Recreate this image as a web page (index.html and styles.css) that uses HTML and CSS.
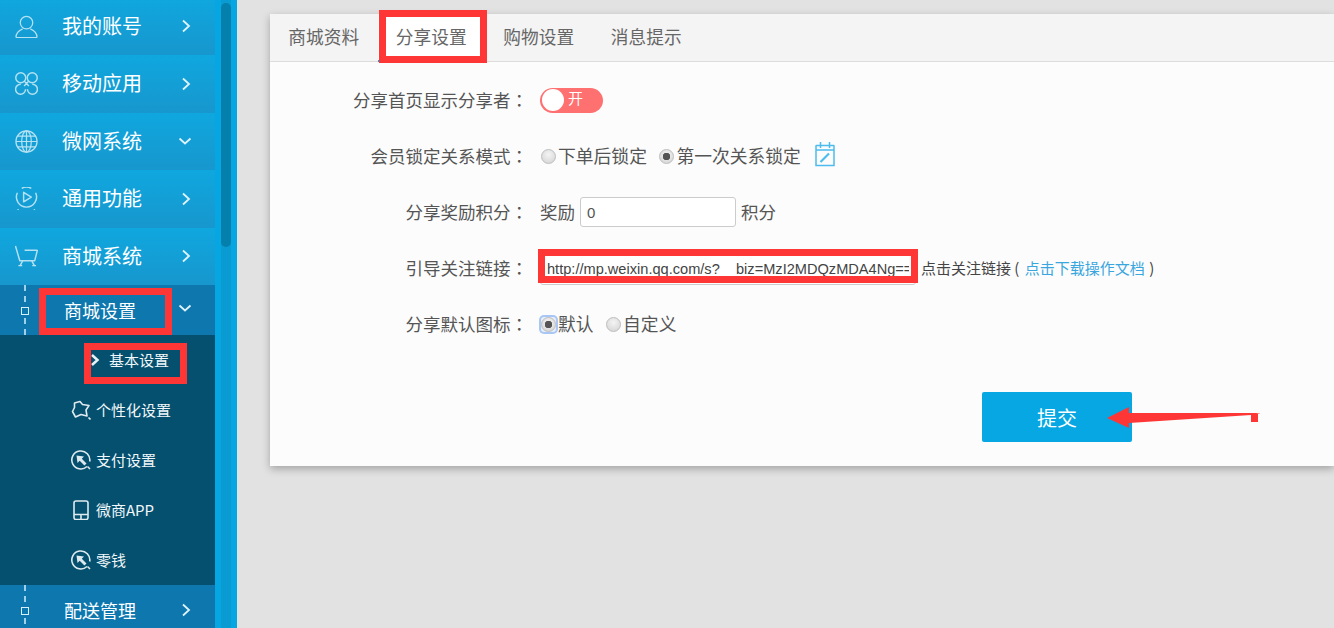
FILE: index.html
```html
<!DOCTYPE html>
<html lang="zh-CN">
<head>
<meta charset="utf-8">
<title>分享设置</title>
<link rel="stylesheet" href="styles.css">
</head>
<body>
<div class="app">
  <aside class="sidebar">
    <nav class="menu">
      <a class="row">
        <svg class="ico" viewBox="0 0 24 24"><circle cx="12" cy="8" r="6.500"/><path d="M1 23.500c0-5 3.500-7.500 7-9M23 23.500c0-5-3.500-7.500-7-9M1 23.500h22"/></svg>
        <span class="row-label">我的账号</span>
        <svg class="chev" viewBox="0 0 10 14"><path d="M2 1.500 8 7l-6 5.500"/></svg>
      </a>
      <a class="row">
        <svg class="ico ico-bold" viewBox="0 0 24 24"><circle cx="6" cy="6" r="5.200"/><circle cx="18" cy="6" r="5.200"/><path d="M11 18a5.200 5.200 0 1 1-5-5.200M13 18a5.200 5.200 0 1 0 5-5.200M9.500 9.500l5 5M14.500 9.500l-5 5"/></svg>
        <span class="row-label">移动应用</span>
        <svg class="chev" viewBox="0 0 10 14"><path d="M2 1.500 8 7l-6 5.500"/></svg>
      </a>
      <a class="row">
        <svg class="ico" viewBox="0 0 24 24"><circle cx="12" cy="12" r="11"/><ellipse cx="12" cy="12" rx="5" ry="11"/><path d="M12 1v22M1 12h22M2.500 6.500h19M2.500 17.500h19"/></svg>
        <span class="row-label">微网系统</span>
        <svg class="chev chev-down" viewBox="0 0 14 10"><path d="M1.500 2.500 7 7.500l5.500-5"/></svg>
      </a>
      <a class="row">
        <svg class="ico ico-bold" viewBox="0 0 24 24"><path d="M2.500 6A10.500 10.500 0 1 0 21.500 6M7 1.500A10.500 10.500 0 0 1 17 1.500"/><path d="M9 5.500l8 5-8 5z"/><path class="ico-dots" d="M2.500 23.500h1.500M19.500 23.500h1.500"/></svg>
        <span class="row-label">通用功能</span>
        <svg class="chev" viewBox="0 0 10 14"><path d="M2 1.500 8 7l-6 5.500"/></svg>
      </a>
      <a class="row">
        <svg class="ico ico-bold" viewBox="0 0 24 24"><path d="M.5 1 5 16.500h15.500L23.500 5M10 5.500h13"/><path d="M8 16.500 5 22M17.500 16.500 20.500 22M3.500 21.500h4M18 21.500h4"/></svg>
        <span class="row-label">商城系统</span>
        <svg class="chev" viewBox="0 0 10 14"><path d="M2 1.500 8 7l-6 5.500"/></svg>
      </a>
      <a class="row sub-row">
        <span class="node"></span>
        <span class="sub-label">商城设置</span>
        <svg class="chev chev-down" viewBox="0 0 14 10"><path d="M1.500 2.500 7 7.500l5.500-5"/></svg>
      </a>
      <ul class="submenu">
        <li class="leaf leaf-current">
          <svg class="leaf-chev" viewBox="0 0 10 14"><path d="M2 2 7.500 7 2 12"/></svg>
          <span>基本设置</span>
        </li>
        <li class="leaf">
          <svg class="leaf-ico" viewBox="0 0 20 20"><path d="M9 1.500 11.500 4.500 18 5.500 15 10 16 16 10 14.500 4.500 17 1.500 11.500 3.500 7.500 3.500 3z"/><path d="M17.500 17.500l2 2"/></svg>
          <span>个性化设置</span>
        </li>
        <li class="leaf">
          <svg class="leaf-ico" viewBox="0 0 20 20"><path d="M16 16.500A9 9 0 1 1 18.700 11.500M16.500 16.500l2.500 2.500"/><path class="solid" d="M5.500 5.500 13 6.500 10.800 8.700 15.500 13.400 13.400 15.500 8.700 10.800 6.500 13z"/></svg>
          <span>支付设置</span>
        </li>
        <li class="leaf">
          <svg class="leaf-ico" viewBox="0 0 20 20"><rect x="3" y="1" width="14" height="18.500" rx="2"/><path d="M3 14.500h14M10 14.500v5"/></svg>
          <span>微商APP</span>
        </li>
        <li class="leaf">
          <svg class="leaf-ico" viewBox="0 0 20 20"><path d="M16 16.500A9 9 0 1 1 18.700 11.500M16.500 16.500l2.500 2.500"/><path class="solid" d="M5.500 5.500 13 6.500 10.800 8.700 15.500 13.400 13.400 15.500 8.700 10.800 6.500 13z"/></svg>
          <span>零钱</span>
        </li>
      </ul>
      <a class="row sub-row">
        <span class="node"></span>
        <span class="sub-label">配送管理</span>
        <svg class="chev" viewBox="0 0 10 14"><path d="M2 1.500 8 7l-6 5.500"/></svg>
      </a>
    </nav>
    <div class="scrolltrack"><div class="scrollthumb"></div></div>
  </aside>

  <main class="main">
    <section class="panel">
      <div class="tabs">
        <a class="tab">商城资料</a>
        <a class="tab tab-active">分享设置</a>
        <a class="tab">购物设置</a>
        <a class="tab">消息提示</a>
      </div>
      <form class="form">
        <div class="field">
          <label class="field-label">分享首页显示分享者<span class="colon" lang="zh-TW">：</span></label>
          <div class="field-body">
            <span class="toggle"><span class="knob"></span><span class="toggle-text">开</span></span>
          </div>
        </div>
        <div class="field">
          <label class="field-label">会员锁定关系模式<span class="colon" lang="zh-TW">：</span></label>
          <div class="field-body">
            <label class="radio"><input type="radio" name="lock"><span class="txt">下单后锁定</span></label>
            <label class="radio"><input type="radio" name="lock" checked><span class="txt">第一次关系锁定</span></label>
            <svg class="cal" viewBox="0 0 20 26"><path d="M1.500 4.500h17a.5.5 0 0 1 .5.5v19.500H1V5a.5.5 0 0 1 .5-.5zM1 9h18M5.500 1v6M14.500 1v6"/><path class="cal-pen" d="M5.500 21 14 12.500"/></svg>
          </div>
        </div>
        <div class="field">
          <label class="field-label">分享奖励积分<span class="colon" lang="zh-TW">：</span></label>
          <div class="field-body">
            <span class="txt">奖励</span>
            <input class="num" type="text" value="0">
            <span class="txt">积分</span>
          </div>
        </div>
        <div class="field">
          <label class="field-label">引导关注链接<span class="colon" lang="zh-TW">：</span></label>
          <div class="field-body">
            <input class="url" type="text" value="http://mp.weixin.qq.com/s?__biz=MzI2MDQzMDA4Ng==&amp;mid=100000002&amp;idx=1">
            <span class="hint">点击关注链接 ( <a class="doc">点击下载操作文档</a> )</span>
          </div>
        </div>
        <div class="field">
          <label class="field-label">分享默认图标<span class="colon" lang="zh-TW">：</span></label>
          <div class="field-body">
            <label class="radio"><span class="ring"><input type="radio" name="icon" checked></span><span class="txt">默认</span></label>
            <label class="radio"><input type="radio" name="icon"><span class="txt">自定义</span></label>
          </div>
        </div>
        <div class="actions"><button class="submit" type="button">提交</button></div>
      </form>
    </section>
  </main>
</div>

<div class="mark mark-tab"></div>
<div class="mark mark-sub"></div>
<div class="mark mark-leaf"></div>
<div class="mark mark-url"></div>
<svg class="arrow" viewBox="0 0 160 30"><path d="M7 18 29 7V13L161 13 151 15 29 23V28z"/><rect x="151" y="14" width="7" height="8"/></svg>
</body>
</html>
```
FILE: styles.css
```css
* { box-sizing: border-box; }
html, body { margin: 0; height: 100%; overflow: hidden; }
body {
  background: #e2e2e2;
  font-family: "Noto Sans CJK SC", "Liberation Sans", sans-serif;
  color: #555;
}
.app { display: flex; height: 628px; }

/* sidebar */
.sidebar { display: flex; width: 237px; flex: none; height: 628px; overflow: hidden; }
.menu { width: 215px; flex: none; margin-top: -2.5px; }
.scrolltrack {
  width: 22px;
  padding: 3px 6px 0;
  background: linear-gradient(90deg, #05a6e1 6px, #0a9bd3 6px, #0a9bd3 16px, #05a6e1 16px);
}
.scrollthumb { width: 10px; height: 244px; border-radius: 5px; background: #057fab; }

.row {
  display: flex;
  align-items: center;
  height: 57.5px;
  padding: 0 24px 0 15px;
  background: linear-gradient(#0fa7df, #1797cd);
  color: #fff;
}
.ico { width: 23px; height: 23px; flex: none; fill: none; stroke: #b5e2f3; stroke-width: 1.300; }
.ico-bold { stroke-width: 1.500; stroke-linejoin: round; }
.ico-dots { stroke-width: 1; }
.row-label { margin: 0 0 1px 24px; font-size: 20px; line-height: 1; }
.chev { width: 10px; height: 14px; margin-left: auto; fill: none; stroke: #dff3fb; stroke-width: 1.800; }
.chev-down { width: 14px; height: 10px; margin-right: -1px; }

.sub-row {
  position: relative;
  height: 50px;
  padding-left: 64px;
  background: #0d77ae;
}
.sub-row::before {
  content: "";
  position: absolute;
  left: 24px;
  top: 0;
  bottom: 0;
  border-left: 2px dashed #9fd2ea;
}
.node {
  position: absolute;
  left: 21px;
  top: 22px;
  width: 8px;
  height: 8px;
  border: 1.500px solid #d8eef8;
  background: #0d77ae;
}
.sub-label { font-size: 18px; line-height: 1; color: #fff; }
.sub-row .chev-down { margin-bottom: 4px; }

.submenu { margin: 0; padding: 0; list-style: none; background: #04506e; }
.leaf {
  display: flex;
  align-items: center;
  height: 50px;
  padding-left: 71px;
  font-size: 15px;
  line-height: 1;
  color: #f1f7fa;
}
.leaf span { margin: 0 0 2px 5px; }
.leaf-current { padding-left: 90px; }
.leaf-current span { margin-left: 9px; }
.leaf-chev { width: 10px; height: 14px; fill: none; stroke: #e8f2f6; stroke-width: 2.500; }
.leaf-ico { width: 20px; height: 20px; flex: none; fill: none; stroke: #dfeaef; stroke-width: 1.600; stroke-linejoin: round; }
.leaf-ico .solid { fill: #dfeaef; stroke: none; }

/* main */
.main { flex: 1; min-width: 0; padding: 14px 0 0 33px; }
.panel {
  height: 452px;
  padding-left: 1px;
  background: #fcfcfc;
  box-shadow: 0 3px 8px rgba(0, 0, 0, .28);
}
.tabs {
  display: flex;
  height: 48px;
  margin-left: -1px;
  background: #f4f4f4;
  border-bottom: 1px solid #ddd;
}
.tab {
  width: 107.500px;
  text-align: center;
  font-size: 17.700px;
  line-height: 44px;
  color: #666;
}
.tab-active { background: #fff; border-bottom: 2px solid #06a7e2; height: 48px; }

.form { padding-top: 10px; }
.field { display: flex; align-items: center; height: 56px; }
.field-label {
  width: 269px;
  flex: none;
  padding: 0 12px 2px 0;
  text-align: right;
  font-size: 17.500px;
  color: #555;
}
.colon { font-family: "Noto Sans CJK TC", sans-serif; }
.field-body { display: flex; align-items: center; font-size: 17.500px; color: #555; }
.txt { margin-bottom: 2px; }

.toggle {
  display: flex;
  align-items: center;
  width: 63px;
  height: 25px;
  border-radius: 13px;
  background: #ff7070;
  padding-left: 2px;
  color: #fff;
  font-size: 15px;
}
.knob { width: 22px; height: 22px; border-radius: 50%; background: #fff; }
.toggle-text { margin: 0 0 6px 4px; line-height: 1; }

.radio { display: flex; align-items: center; margin-right: 11.500px; font-size: 17.800px; }
.radio input {
  appearance: none;
  width: 15px;
  height: 15px;
  margin: 0 2px 0 1px;
  border-radius: 50%;
  border: 1px solid #bdbdbd;
  background: radial-gradient(circle at 50% 35%, #f4f4f4, #d2d2d2);
}
.radio input:checked {
  background: radial-gradient(circle, #555 0 3.500px, transparent 4px), radial-gradient(circle at 50% 35%, #f4f4f4, #d2d2d2);
}
.ring {
  display: flex;
  margin: 0 2px 0 1px;
  border-radius: 3px;
  background: #e8eefa;
  box-shadow: 0 0 0 2px #a9c7f5;
}
.ring input { margin: 0; outline: 0; }
.cal { width: 20px; height: 26px; margin: -4px 0 0 3px; fill: none; stroke: #4cbcee; stroke-width: 1.500; }
.cal-pen { stroke-width: 2.200; }

.num {
  width: 156px;
  height: 30px;
  margin: 0 5px;
  padding: 0 6px;
  border: 1px solid #ccc;
  border-radius: 3px;
  background: #fff;
  font: 15px "Liberation Sans", sans-serif;
  color: #555;
}
.url {
  width: 376px;
  height: 31px;
  margin: 2px 5px 0 0;
  padding: 0 6px;
  border: 1px solid #ccc;
  border-radius: 3px;
  background: #fff;
  font: 14.600px "Liberation Sans", sans-serif;
  color: #444;
}
.hint { margin-bottom: 2px; font-size: 15px; color: #444; white-space: nowrap; }
.doc { margin: 0 1px 0 2px; color: #3aa6de; }

.actions { display: flex; padding: 40px 0 0 711px; }
.submit {
  width: 150px;
  height: 50px;
  border: 0;
  border-radius: 2px;
  background: #06a7e2;
  color: #fff;
  font: 20px "Noto Sans CJK SC", sans-serif;
}

/* annotation layer */
.mark { position: absolute; border: 7px solid #ff3636; }
.mark-tab { left: 379px; top: 10px; width: 108px; height: 53px; }
.mark-sub { left: 39px; top: 288px; width: 133px; height: 47px; }
.mark-leaf { left: 84px; top: 343px; width: 103px; height: 41px; }
.mark-url { left: 538px; top: 249px; width: 380px; height: 34px; }
.arrow { position: absolute; left: 1100px; top: 400px; width: 160px; height: 30px; fill: #ff3636; }
```
